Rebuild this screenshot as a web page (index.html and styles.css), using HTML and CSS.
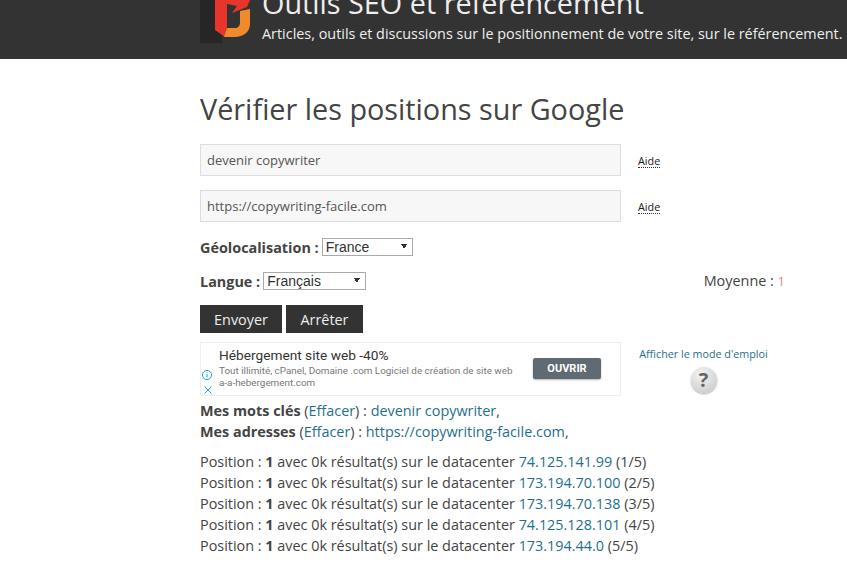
FILE: index.html
```html
<!DOCTYPE html>
<html lang="fr">
<head>
  <meta charset="UTF-8">
  <title>Vérifier les positions sur Google</title>
  <link rel="stylesheet" href="styles.css">
</head>
<body>

  <header class="top-bar">
    <div class="top-inner">
      <svg class="logo" width="52" height="43" viewBox="0 0 52 43">
        <rect x="0" y="0" width="22" height="43" fill="#262626"/>
        <path d="M15 0H27V28L25 37L15 30Z" fill="#e8352c"/>
        <path d="M27 0H50L47 7L32 13L37 6L27 4Z" fill="#e8352c"/>
        <path d="M40 11L50 9V24C50 32 43 37 35 37H24L27 28H35C38 28 40 26 40 22Z" fill="#f08a2c"/>
      </svg>
      <div class="site-title">
        <div class="site-name">Outils SEO et référencement</div>
        <div class="site-desc">Articles, outils et discussions sur le positionnement de votre site, sur le référencement.</div>
      </div>
    </div>
  </header>

  <main class="content">
    <h1>Vérifier les positions sur Google</h1>

    <div class="field-row">
      <input type="text" class="text-input" value="devenir copywriter">
      <span class="help">Aide</span>
    </div>
    <div class="field-row">
      <input type="text" class="text-input" value="https://copywriting-facile.com">
      <span class="help">Aide</span>
    </div>

    <div class="select-row geo">
      <label>Géolocalisation :</label>
      <select class="geo-select"><option>France</option></select>
    </div>
    <div class="select-row lang">
      <label>Langue :</label>
      <select class="lang-select"><option>Français</option></select>
      <span class="average">Moyenne : <span class="average-num">1</span></span>
    </div>

    <div class="buttons">
      <button class="send">Envoyer</button>
      <button class="stop">Arrêter</button>
    </div>

    <div class="ad-row">
      <div class="ad">
        <div class="ad-text">
          <div class="ad-title">Hébergement site web -40%</div>
          <div class="ad-desc">Tout illimité, cPanel, Domaine .com Logiciel de création de site web<br>a-a-hebergement.com</div>
        </div>
        <div class="ad-button">OUVRIR</div>
        <svg class="ad-info" width="12" height="12" viewBox="0 0 12 12">
          <circle cx="6" cy="6" r="4.6" fill="none" stroke="#1aa6c8" stroke-width="1"/>
          <rect x="5.5" y="5" width="1" height="3.4" fill="#1aa6c8"/>
          <rect x="5.5" y="3.3" width="1" height="1" fill="#1aa6c8"/>
        </svg>
        <svg class="ad-close" width="10" height="10" viewBox="0 0 10 10">
          <path d="M1.5 1.5l7 7M8.5 1.5l-7 7" stroke="#1aa6c8" stroke-width="1"/>
        </svg>
      </div>
      <div class="manual">
        <a>Afficher le mode d'emploi</a>
        <div class="question">?</div>
      </div>
    </div>

    <p class="summary"><b>Mes mots clés</b> (<a>Effacer</a>) : <a>devenir copywriter</a>,<br>
    <b>Mes adresses</b> (<a>Effacer</a>) : <a>https://copywriting-facile.com</a>,</p>

    <ul class="results">
      <li>Position : <b>1</b> avec 0k résultat(s) sur le datacenter <a>74.125.141.99</a> (1/5)</li>
      <li>Position : <b>1</b> avec 0k résultat(s) sur le datacenter <a>173.194.70.100</a> (2/5)</li>
      <li>Position : <b>1</b> avec 0k résultat(s) sur le datacenter <a>173.194.70.138</a> (3/5)</li>
      <li>Position : <b>1</b> avec 0k résultat(s) sur le datacenter <a>74.125.128.101</a> (4/5)</li>
      <li>Position : <b>1</b> avec 0k résultat(s) sur le datacenter <a>173.194.44.0</a> (5/5)</li>
    </ul>
  </main>

</body>
</html>
```

FILE: styles.css
```css
body {
  margin: 0;
  background: #fff;
  color: #444;
  font-family: "Open Sans", sans-serif;
  font-size: 14.4px;
  overflow: hidden;
}

a { color: #1f6f8b; }

.top-bar {
  background: #333;
  height: 59px;
  overflow: hidden;
}
.top-inner {
  display: flex;
  margin-left: 200px;
  margin-top: -15px;
  gap: 10px;
  width: 660px;
}
.logo { flex: none; margin-top: 15px; }
.site-name {
  color: #eee;
  font-size: 28.8px;
  line-height: 36px;
  white-space: nowrap;
}
.site-desc {
  color: #eee;
  line-height: 20px;
  margin-top: 3px;
  white-space: nowrap;
}

.content {
  margin-left: 200px;
  width: 590px;
}

h1 {
  font-size: 28.8px;
  font-weight: 400;
  line-height: 38px;
  margin: 31px 0 16px;
}

.field-row {
  display: flex;
  align-items: center;
  margin-bottom: 14px;
}
.text-input {
  box-sizing: border-box;
  width: 421px;
  height: 32px;
  padding: 0 6px;
  background: #f7f7f7;
  border: 1px solid #ddd;
  color: #555;
  font: 13px "Open Sans", sans-serif;
}
.help {
  margin-left: 17px;
  margin-top: 2px;
  color: #222;
  font-size: 10.8px;
  border-bottom: 1px dotted #333;
  line-height: 13px;
}

.select-row {
  display: flex;
  align-items: center;
}
.select-row label { font-weight: 700; margin-right: 3px; }
.geo { height: 20px; margin-top: 15px; margin-bottom: 14px; }
.lang { height: 20px; margin-bottom: 14px; }
select {
  appearance: none;
  box-sizing: border-box;
  height: 18px;
  font: 14px "Liberation Sans", sans-serif;
  color: #333;
  border: 1px solid #aaa;
  padding: 0 0 0 3px;
  background-color: #fff;
  background-image: linear-gradient(to bottom left, #333 50%, transparent 50%), linear-gradient(to bottom right, #333 50%, transparent 50%);
  background-size: 3px 5px, 3px 5px;
  background-repeat: no-repeat;
  background-position: right 8px top 5px, right 5px top 5px;
}
.geo-select { width: 91px; }
.lang-select { width: 103px; }
.average { margin-left: auto; margin-right: 5px; margin-bottom: 2px; }
.average-num { color: #e58a80; font-size: 13px; }

.buttons {
  display: flex;
  gap: 4px;
  margin-bottom: 9px;
}
button {
  background: #333;
  color: #eee;
  border: 0;
  height: 28px;
  padding: 0;
  font: 14.4px "Open Sans", sans-serif;
}
.send { width: 82px; }
.stop { width: 77px; }

.ad-row { display: flex; gap: 18px; }
.ad {
  position: relative;
  box-sizing: border-box;
  width: 421px;
  height: 54px;
  border: 1px solid #eee;
  display: flex;
  align-items: center;
  justify-content: space-between;
  padding: 0 19px 0 18px;
  font-family: Roboto, sans-serif;
}
.ad-text { padding-bottom: 2px; }
.ad-title { color: #333; font-size: 13.7px; line-height: 16px; }
.ad-desc { color: #777; font-size: 9.87px; line-height: 12px; margin-top: 2px; }
.ad-button {
  background: #5f6a72;
  color: #fff;
  font-size: 11px;
  font-weight: 700;
  width: 68px;
  height: 21px;
  line-height: 21px;
  text-align: center;
  border-radius: 2px;
  box-shadow: 0 1px 2px rgba(0, 0, 0, 0.3);
  margin-bottom: 1px;
}
.ad-info { position: absolute; left: 0; bottom: 14px; }
.ad-close { position: absolute; left: 2px; bottom: 0; }

.manual { font-size: 10.75px; text-align: center; width: 129px; padding-top: 1px; }
.manual a { line-height: 22px; }
.question {
  width: 26px;
  height: 26px;
  margin: 2px auto 0;
  border-radius: 50%;
  background: radial-gradient(circle at 40% 30%, #f4f4f4, #c4c4c4);
  box-shadow: 0 1px 2px rgba(0, 0, 0, 0.35);
  color: #666;
  font-size: 20px;
  font-weight: 700;
  line-height: 26px;
}

.summary {
  margin: 4px 0 9px;
  line-height: 21px;
}
.results {
  list-style: none;
  margin: 0;
  padding: 0;
  line-height: 21px;
}
```
